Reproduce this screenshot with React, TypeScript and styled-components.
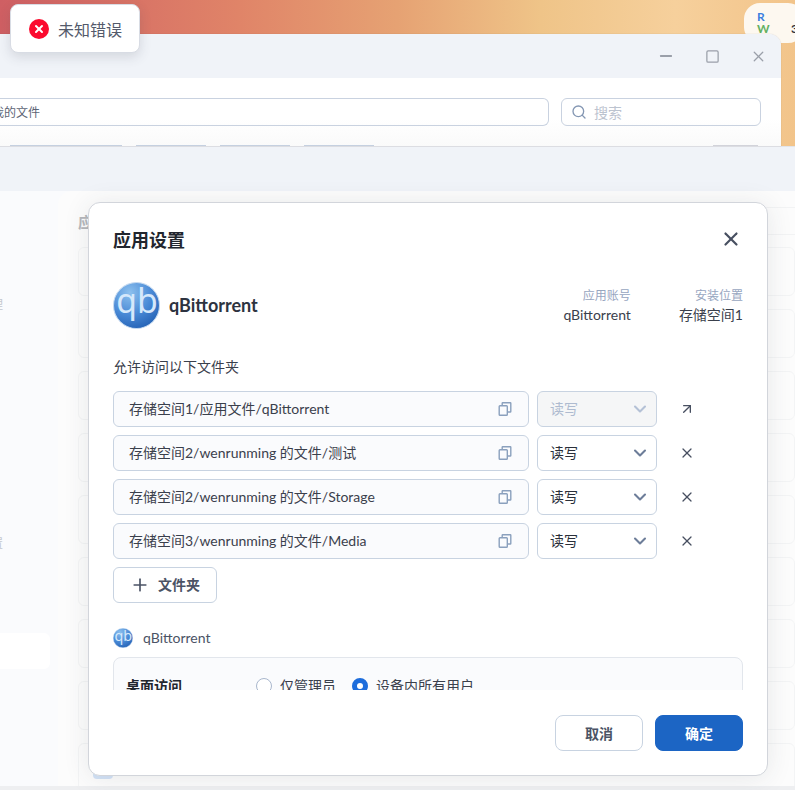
import styled, { createGlobalStyle } from "styled-components";
import { X, ChevronDown, ArrowUpRight, Plus, Search, Minus, Square } from "lucide-react";

const GlobalStyle = createGlobalStyle`
  html, body {
    margin: 0;
    padding: 0;
    background: #eeeff1;
  }
  * {
    box-sizing: border-box;
  }
`;

const FONT = `"Lato", "Noto Sans CJK SC", sans-serif`;

const Desktop = styled.div`
  position: relative;
  width: 795px;
  height: 790px;
  overflow: hidden;
  font-family: ${FONT};
  color: #2a2f3a;
  background: linear-gradient(90deg, #cf5f63 0%, #e08468 30%, #e6a273 50%, #efc488 68%, #f6d09c 85%, #f2c48a 100%);
`;

const Widget = styled.div`
  position: absolute;
  left: 744px;
  top: 3px;
  width: 60px;
  height: 40px;
  padding: 8px 0 0 13px;
  border-radius: 16px;
  background: #fdf8f0;
  font-size: 12px;
  font-weight: 700;
  display: grid;
  grid-template-columns: 10px 1fr;
  grid-auto-rows: 12px;
  column-gap: 24px;
  line-height: 12px;
`;

const WidgetLetter = styled.div<{ $color: string }>`
  color: ${(p) => p.$color};
`;

const FileWindow = styled.div`
  position: relative;
  width: 781px;
  margin-top: 34px;
  height: 112px;
  border-top-right-radius: 12px;
  background: #fff;
  overflow: hidden;
  box-shadow: 0 0 1px rgba(60, 60, 80, 0.35);
`;

const TitleBar = styled.div`
  height: 44px;
  background: #f0f3f8;
  display: flex;
  justify-content: flex-end;
  align-items: center;
  color: #9a9fa9;
`;

const WinBtn = styled.span`
  width: 46px;
  display: flex;
  justify-content: center;
`;

const Toolbar = styled.div`
  height: 68px;
  display: flex;
  flex-direction: column;
  background: linear-gradient(180deg, #fff 60%, #fafafa 100%);
`;

const ToolRow = styled.div`
  display: flex;
  gap: 12px;
  padding: 20px 20px 0 0;
`;

const PathBox = styled.div`
  flex: 1;
  height: 28px;
  border: 1px solid #c9d2e0;
  border-left: none;
  border-radius: 0 6px 6px 0;
  font-size: 12px;
  line-height: 27px;
  color: #5d6475;
  overflow: hidden;
  white-space: nowrap;
`;

const PathText = styled.span`
  display: block;
  margin-left: -8px;
`;

const SearchBox = styled.div`
  width: 200px;
  height: 28px;
  border: 1px solid #c9d2e0;
  border-radius: 6px;
  display: flex;
  align-items: center;
  gap: 7px;
  padding-left: 9px;
  font-size: 14px;
  color: #bcc3cf;
`;

const TabTops = styled.div`
  margin-top: auto;
  display: flex;
  gap: 14px;
  padding: 0 23px 0 10px;
`;

const TabTop = styled.span<{ $w: number; $end?: boolean }>`
  width: ${(p) => p.$w}px;
  height: 1px;
  background: ${(p) => (p.$end ? "#d2d3da" : "#c5d0e0")};
  margin-left: ${(p) => (p.$end ? "auto" : "0")};
`;

const AppWindow = styled.div`
  height: 644px;
  background: #f0f3f8;
  padding-top: 44px;
  border-top: 1px solid #e2e4e9;
`;

const AppBody = styled.div`
  height: 600px;
  display: flex;
  background: #fafbfd;
`;

const Sidebar = styled.div`
  width: 58px;
  flex: none;
  display: flex;
  flex-direction: column;
  padding-top: 105px;
  overflow: hidden;
`;

const SideLabel = styled.div<{ $gap: number }>`
  margin: ${(p) => p.$gap}px 0 0 -21px;
  height: 18px;
  font-size: 12px;
  line-height: 18px;
  color: #c4c7cd;
`;

const SideActive = styled.div`
  margin-top: 80px;
  width: 50px;
  height: 36px;
  flex: none;
  border-radius: 0 6px 6px 0;
  background: #fff;
`;

const Main = styled.div`
  flex: 1;
  padding: 16px 0 0 20px;
  border-radius: 14px 0 0 0;
  background: #fcfcfc;
  overflow: hidden;
`;

const MainHead = styled.div`
  height: 40px;
  display: flex;
  align-items: flex-start;
`;

const MainTitle = styled.div`
  font-size: 15px;
  font-weight: 700;
  line-height: 30px;
  color: #b5b7bb;
`;

const HeadStrip = styled.div`
  flex: 1;
  margin-left: 100px;
  height: 28px;
  border-top: 1px solid #f2f3f4;
  border-bottom: 1px solid #f2f3f4;
`;

const AppGrid = styled.div`
  display: flex;
  flex-direction: column;
  gap: 13px;
`;

const AppCard = styled.div`
  height: 49px;
  flex: none;
  padding: 15px 0 0 14px;
  border: 1px solid #f3f4f5;
  border-radius: 6px;
`;

const CardIcon = styled.div`
  width: 20px;
  height: 20px;
  border-radius: 4px;
  background: #d3e2f6;
`;

const BottomBand = styled.div`
  position: absolute;
  left: 0;
  right: 0;
  bottom: 0;
  height: 4px;
  background: #eeeff1;
`;

const Toast = styled.div`
  position: absolute;
  left: 10px;
  top: 4px;
  width: 130px;
  height: 49px;
  display: flex;
  align-items: center;
  gap: 9px;
  padding-left: 18px;
  background: #fff;
  border: 1px solid #d8dce4;
  border-radius: 8px;
  box-shadow: 0 4px 12px rgba(60, 70, 90, 0.16);
  font-size: 16px;
  color: #535a6b;
`;

const ToastIcon = styled.span`
  width: 20px;
  height: 20px;
  border-radius: 50%;
  background: #fb0a2e;
  color: #fff;
  display: flex;
  align-items: center;
  justify-content: center;
`;

const Dialog = styled.div`
  position: absolute;
  left: 88px;
  top: 202px;
  width: 680px;
  height: 574px;
  display: flex;
  flex-direction: column;
  background: #fff;
  border: 1px solid #d2d5db;
  border-radius: 12px;
  box-shadow: 0 2px 26px rgba(50, 55, 70, 0.1);
`;

const DialogHead = styled.div`
  height: 72px;
  flex: none;
  display: flex;
  align-items: center;
  justify-content: space-between;
  padding: 0 25px 0 24px;
`;

const DialogTitle = styled.div`
  font-size: 18px;
  font-weight: 700;
  color: #22262e;
`;

const CloseBtn = styled.span`
  display: flex;
  color: #474f60;
`;

const DialogBody = styled.div`
  flex: 1;
  min-height: 0;
  overflow: hidden;
  padding: 6px 24px 0;
`;

const AppRow = styled.div`
  display: flex;
  align-items: center;
  height: 48px;
`;

const AppName = styled.div`
  flex: 1;
  margin-left: 9px;
  font-size: 18px;
  font-weight: 700;
  color: #2d3340;
`;

const Meta = styled.div`
  margin-left: 48px;
  text-align: right;
  font-size: 14px;
  line-height: 20px;
  color: #3a404c;
`;

const MetaLabel = styled.div`
  font-size: 12px;
  margin-bottom: -1px;
  color: #97a6bf;
`;

const SectionLabel = styled.div`
  margin-top: 28px;
  font-size: 14px;
  line-height: 20px;
  color: #3a404c;
`;

const FolderList = styled.div`
  margin-top: 14px;
  display: flex;
  flex-direction: column;
  gap: 8px;
`;

const FolderRow = styled.div`
  display: flex;
  align-items: center;
  gap: 8px;
`;

const FolderPath = styled.div`
  width: 416px;
  height: 36px;
  display: flex;
  align-items: center;
  justify-content: space-between;
  padding: 0 16px 2px 15px;
  background: #fafbfd;
  border: 1px solid #c8d3e1;
  border-radius: 6px;
  font-size: 14px;
  color: #3a404c;

  svg {
    margin-top: 2px;
  }
`;

const Access = styled.div<{ $disabled?: boolean }>`
  width: 120px;
  height: 36px;
  display: flex;
  align-items: center;
  justify-content: space-between;
  padding: 0 6px 2px 12px;
  background: ${(p) => (p.$disabled ? "#f5f6f7" : "#fff")};
  border: 1px solid #c8d3e1;
  border-radius: 6px;
  font-size: 14px;
  color: ${(p) => (p.$disabled ? "#aebbd0" : "#2a2f3a")};
`;

const Chevron = styled.span<{ $disabled?: boolean }>`
  display: flex;
  margin-top: 2px;
  color: ${(p) => (p.$disabled ? "#b4c1d6" : "#6d7d99")};
`;

const RowAction = styled.span`
  width: 44px;
  display: flex;
  justify-content: center;
  color: #474f60;
`;

const AddBtn = styled.div`
  margin-top: 8px;
  width: 104px;
  height: 36px;
  display: flex;
  align-items: center;
  gap: 8px;
  padding: 0 0 2px 16px;
  border: 1px solid #c8d3e1;
  border-radius: 6px;
  font-size: 14px;
  font-weight: 700;
  color: #4b5365;

  svg {
    margin-top: 2px;
  }
`;

const SubApp = styled.div`
  margin-top: 25px;
  display: flex;
  align-items: center;
  gap: 10px;
  height: 20px;
  padding-bottom: 2px;
  font-size: 14px;
  color: #4b5365;

  svg {
    margin-top: 2px;
  }
`;

const AccessPanel = styled.div`
  margin-top: 9px;
  height: 80px;
  display: flex;
  padding: 19px 12px 0;
  background: #fafbfd;
  border: 1px solid #e2e6ec;
  border-radius: 8px;
  font-size: 14px;
  line-height: 18px;
`;

const PanelLabel = styled.div`
  width: 130px;
  font-weight: 700;
  color: #22262e;
`;

const RadioItem = styled.div`
  display: flex;
  align-items: center;
  gap: 8px;
  margin-right: 16px;
  color: #3a404c;
  height: 18px;
`;

const Radio = styled.span<{ $checked?: boolean }>`
  width: 16px;
  height: 16px;
  border-radius: 50%;
  background: #fff;
  border: ${(p) => (p.$checked ? "5px solid #1d6ddc" : "1px solid #a9b7cd")};
`;

const DialogFoot = styled.div`
  height: 85px;
  flex: none;
  display: flex;
  justify-content: flex-end;
  gap: 12px;
  padding: 25px 24px 0 0;
`;

const FootBtn = styled.div<{ $primary?: boolean }>`
  width: 88px;
  height: 36px;
  display: flex;
  align-items: center;
  justify-content: center;
  border-radius: 8px;
  font-size: 14px;
  font-weight: 700;
  background: ${(p) => (p.$primary ? "#1c65c4" : "#fff")};
  color: ${(p) => (p.$primary ? "#fff" : "#4b5365")};
  border: 1px solid ${(p) => (p.$primary ? "#1c65c4" : "#c8d3e1")};
`;

function QbLogo({ size }: { size: number }) {
  const id = `qb-${size}`;
  return (
    <svg width={size} height={size} viewBox="0 0 46 46" style={{ flex: "none" }}>
      <defs>
        <radialGradient id={id} cx="35%" cy="22%" r="85%">
          <stop offset="0%" stopColor="#8cc0ee" />
          <stop offset="55%" stopColor="#4a8ad6" />
          <stop offset="100%" stopColor="#2260b4" />
        </radialGradient>
      </defs>
      <circle cx="23" cy="23" r="22.5" fill={`url(#${id})`} stroke="#c6daf0" strokeWidth="1" />
      <text x="23.5" y="30" textAnchor="middle" fontSize="33" fontFamily="Noto Sans, sans-serif" fill="#d5e8fb">
        qb
      </text>
    </svg>
  );
}

function CopyGlyph() {
  return (
    <svg width="14" height="14" viewBox="0 0 14 14" fill="none" stroke="#8aa0bd" strokeWidth="1.4" style={{ flex: "none" }}>
      <rect x="1.2" y="3.7" width="8.1" height="9.6" rx="0.8" />
      <path d="M4.2 3.7V1.2c0-.3.2-.5.5-.5h7.6c.3 0 .5.2.5.5v8.3c0 .3-.2.5-.5.5H9.3" />
    </svg>
  );
}

const folders = [
  { path: "存储空间1/应用文件/qBittorrent", locked: true },
  { path: "存储空间2/wenrunming 的文件/测试" },
  { path: "存储空间2/wenrunming 的文件/Storage" },
  { path: "存储空间3/wenrunming 的文件/Media" },
];

function App() {
  return (
    <Desktop>
      <GlobalStyle />
      <Widget>
        <WidgetLetter $color="#3b7fe0">R</WidgetLetter>
        <span />
        <WidgetLetter $color="#62b062">W</WidgetLetter>
        <span>3</span>
      </Widget>
      <FileWindow>
        <TitleBar>
          <WinBtn>
            <Minus size={18} strokeWidth={2.4} />
          </WinBtn>
          <WinBtn>
            <Square size={15} strokeWidth={2} />
          </WinBtn>
          <WinBtn>
            <X size={17} strokeWidth={1.8} />
          </WinBtn>
        </TitleBar>
        <Toolbar>
          <ToolRow>
            <PathBox>
              <PathText>我的文件</PathText>
            </PathBox>
            <SearchBox>
              <Search size={16} color="#8497b3" />
              搜索
            </SearchBox>
          </ToolRow>
          <TabTops>
            <TabTop $w={112} />
            <TabTop $w={70} />
            <TabTop $w={70} />
            <TabTop $w={70} />
            <TabTop $w={45} $end />
          </TabTops>
        </Toolbar>
      </FileWindow>
      <AppWindow>
        <AppBody>
          <Sidebar>
            <SideLabel $gap={0}>管理</SideLabel>
            <SideLabel $gap={221}>设置</SideLabel>
            <SideActive />
          </Sidebar>
          <Main>
            <MainHead>
              <MainTitle>应用</MainTitle>
              <HeadStrip />
            </MainHead>
            <AppGrid>
              {Array.from({ length: 9 }).map((_, i) => (
                <AppCard key={i}>
                  <CardIcon />
                </AppCard>
              ))}
            </AppGrid>
          </Main>
        </AppBody>
      </AppWindow>
      <BottomBand />
      <Dialog>
        <DialogHead>
          <DialogTitle>应用设置</DialogTitle>
          <CloseBtn>
            <X size={22} strokeWidth={2.4} />
          </CloseBtn>
        </DialogHead>
        <DialogBody>
          <AppRow>
            <QbLogo size={47} />
            <AppName>qBittorrent</AppName>
            <Meta>
              <MetaLabel>应用账号</MetaLabel>
              qBittorrent
            </Meta>
            <Meta>
              <MetaLabel>安装位置</MetaLabel>
              存储空间1
            </Meta>
          </AppRow>
          <SectionLabel>允许访问以下文件夹</SectionLabel>
          <FolderList>
            {folders.map((f) => (
              <FolderRow key={f.path}>
                <FolderPath>
                  {f.path}
                  <CopyGlyph />
                </FolderPath>
                <Access $disabled={f.locked}>
                  读写
                  <Chevron $disabled={f.locked}>
                    <ChevronDown size={20} strokeWidth={2.5} />
                  </Chevron>
                </Access>
                <RowAction>
                  {f.locked ? <ArrowUpRight size={16} strokeWidth={2} /> : <X size={16} strokeWidth={1.9} />}
                </RowAction>
              </FolderRow>
            ))}
          </FolderList>
          <AddBtn>
            <Plus size={20} strokeWidth={2} />
            文件夹
          </AddBtn>
          <SubApp>
            <QbLogo size={20} />
            qBittorrent
          </SubApp>
          <AccessPanel>
            <PanelLabel>桌面访问</PanelLabel>
            <RadioItem>
              <Radio />
              仅管理员
            </RadioItem>
            <RadioItem>
              <Radio $checked />
              设备内所有用户
            </RadioItem>
          </AccessPanel>
        </DialogBody>
        <DialogFoot>
          <FootBtn>取消</FootBtn>
          <FootBtn $primary>确定</FootBtn>
        </DialogFoot>
      </Dialog>
      <Toast>
        <ToastIcon>
          <X size={12} strokeWidth={4} />
        </ToastIcon>
        未知错误
      </Toast>
    </Desktop>
  );
}

export default App;
